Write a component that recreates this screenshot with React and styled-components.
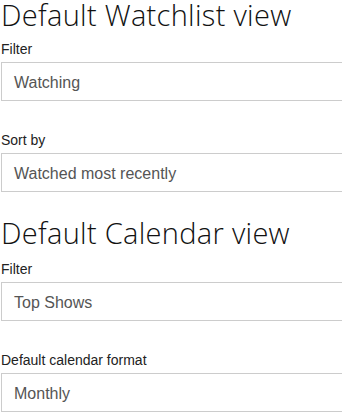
import React from "react";
import styled, { createGlobalStyle } from "styled-components";

const Global = createGlobalStyle`
  html, body { margin: 0; padding: 0; background: #fff; }
`;

const Page = styled.div`
  padding: 0 0 0 1px;
  overflow: hidden;
`;

const Section = styled.section`
  display: flex;
  flex-direction: column;
`;

const Heading = styled.h2`
  margin: ${(p) => p.$before}px 0 ${(p) => p.$after}px 0;
  font-family: "Open Sans", sans-serif;
  font-weight: 300;
  font-size: 29px;
  line-height: 30px;
  color: #111;
  letter-spacing: 0.3px;
  white-space: nowrap;
`;

const Field = styled.div`
  display: flex;
  flex-direction: column;
  margin-bottom: ${(p) => p.$after}px;
`;

const Label = styled.label`
  font-family: "Liberation Sans", Arial, sans-serif;
  font-size: 14px;
  line-height: 18px;
  color: #222;
  margin-bottom: 4px;
`;

const Select = styled.div`
  box-sizing: border-box;
  height: 39px;
  margin-right: -12px;
  border: 1px solid #ccc;
  padding: 2px 12px 0;
  display: flex;
  align-items: center;
  font-family: "Liberation Sans", Arial, sans-serif;
  font-size: 16px;
  color: #555;
`;

export default function App() {
  return (
    <>
      <Global />
      <Page>
        <Section>
          <Heading $before={0} $after={10}>Default Watchlist view</Heading>
          <Field $after={30}>
            <Label>Filter</Label>
            <Select>Watching</Select>
          </Field>
          <Field $after={0}>
            <Label>Sort by</Label>
            <Select>Watched most recently</Select>
          </Field>
        </Section>
        <Section>
          <Heading $before={26} $after={12}>Default Calendar view</Heading>
          <Field $after={30}>
            <Label>Filter</Label>
            <Select>Top Shows</Select>
          </Field>
          <Field $after={0}>
            <Label>Default calendar format</Label>
            <Select>Monthly</Select>
          </Field>
        </Section>
      </Page>
    </>
  );
}
